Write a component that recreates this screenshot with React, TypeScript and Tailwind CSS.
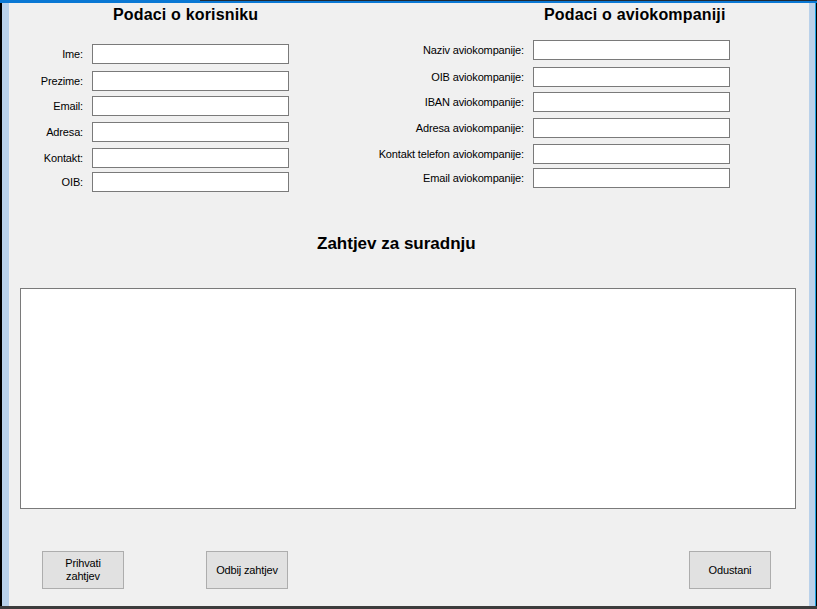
import React from "react";

const userRows = [
  { label: "Ime:", mt: "mt-[20px]" },
  { label: "Prezime:", mt: "mt-[7px]" },
  { label: "Email:", mt: "mt-[5px]" },
  { label: "Adresa:", mt: "mt-[6px]" },
  { label: "Kontakt:", mt: "mt-[6px]" },
  { label: "OIB:", mt: "mt-[4px]" },
];

const airlineRows = [
  { label: "Naziv aviokompanije:", mt: "mt-[16px]" },
  { label: "OIB aviokompanije:", mt: "mt-[7px]" },
  { label: "IBAN aviokompanije:", mt: "mt-[5px]" },
  { label: "Adresa aviokompanije:", mt: "mt-[6px]" },
  { label: "Kontakt telefon aviokompanije:", mt: "mt-[6px]" },
  { label: "Email aviokompanije:", mt: "mt-[4px]" },
];

function Field({ label, mt, labelW }: { label: string; mt: string; labelW: string }) {
  return (
    <div className={`flex items-center h-[20px] ${mt}`}>
      <span className={`${labelW} text-right text-[11px] tracking-[-0.15px] leading-[20px] whitespace-nowrap`}>
        {label}
      </span>
      <input className="ml-[9px] h-[20px] w-[197px] border border-[#7a7a7a] bg-white outline-none" />
    </div>
  );
}

function WinButton({ children, className = "" }: { children: React.ReactNode; className?: string }) {
  return (
    <button
      className={`flex h-[38px] w-[82px] items-center justify-center border border-[#adadad] bg-[#e1e1e1] text-[11px] leading-[13px] tracking-[-0.15px] text-black ${className}`}
    >
      {children}
    </button>
  );
}

export default function App() {
  return (
    <div className="flex h-[609px] w-[817px] flex-col bg-black font-['Liberation_Sans',Arial,sans-serif] text-black">
      {/* title bar edge */}
      <div className="flex h-[1px]">
        <div className="w-[200px] bg-[#0a78d4]" />
        <div className="flex-1 bg-[#1e2a36]" />
      </div>
      <div className="h-[2px] bg-[#0a78d4]" />

      <div className="flex flex-1">
        <div className="w-[2px] bg-black" />
        <div className="w-[7px] bg-[#b9d1ea]" />

        {/* form body */}
        <div className="flex w-[800px] flex-col bg-[#f0f0f0]">
          <div className="flex">
            <div className="w-[360px]">
              <h2 className="mt-[3px] pl-[104px] text-[16px] font-bold leading-[18px] tracking-[0.17px]">Podaci o korisniku</h2>
              {userRows.map((r) => (
                <Field key={r.label} label={r.label} mt={r.mt} labelW="w-[74px]" />
              ))}
            </div>
            <div className="flex-1">
              <h2 className="mt-[3px] pl-[175px] text-[16px] font-bold leading-[18px] tracking-[0.17px]">Podaci o aviokompaniji</h2>
              {airlineRows.map((r) => (
                <Field key={r.label} label={r.label} mt={r.mt} labelW="w-[155px]" />
              ))}
            </div>
          </div>

          <h2 className="mt-[43px] pl-[308px] text-[17px] font-bold leading-[18px]">Zahtjev za suradnju</h2>

          <textarea className="ml-[11px] mt-[35px] h-[221px] w-[776px] resize-none border border-[#7a7a7a] bg-white outline-none" />

          <div className="mt-[42px] flex pl-[33px]">
            <WinButton>
              Prihvati
              <br />
              zahtjev
            </WinButton>
            <WinButton className="ml-[82px]">Odbij zahtjev</WinButton>
            <WinButton className="ml-[401px]">Odustani</WinButton>
          </div>
        </div>

        <div className="w-[6px] bg-[#b9d1ea]" />
        <div className="w-[1px] bg-[#1ba1e2]" />
        <div className="w-[1px] bg-black" />
      </div>

      <div className="h-[3px] bg-[#3c3c3c]" />
    </div>
  );
}
